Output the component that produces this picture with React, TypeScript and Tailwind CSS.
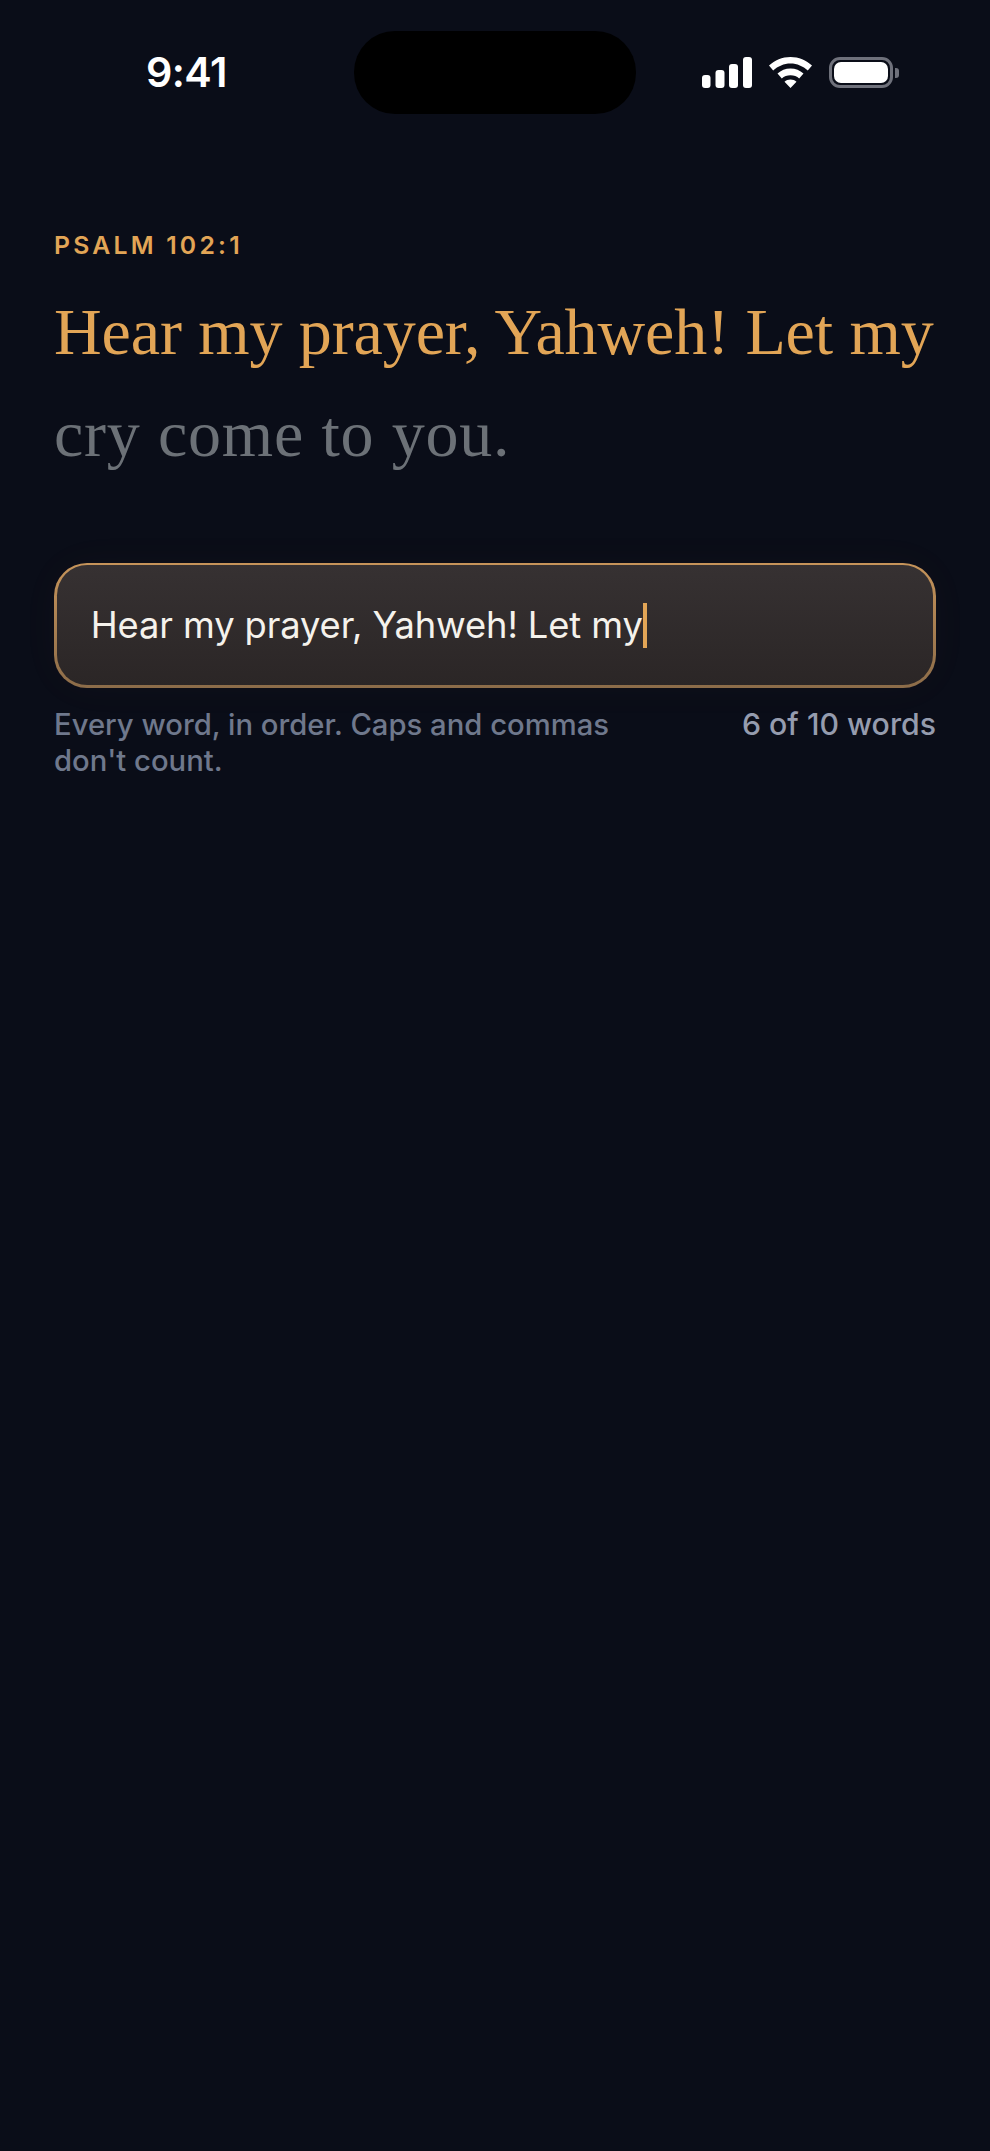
function StatusIcons() {
  return (
    <div className="flex items-center mt-[57px] ml-[66px] h-[31px]">
      <svg width="50" height="31" viewBox="0 0 50 31" fill="#fff" className="block">
        <rect x="0" y="18" width="8.5" height="13" rx="3" />
        <rect x="13.5" y="13" width="9" height="18" rx="3" />
        <rect x="27" y="7" width="9" height="24" rx="3" />
        <rect x="41" y="0" width="9" height="31" rx="3" />
      </svg>
      <svg width="43" height="31" viewBox="0 0 43 31" fill="#fff" className="block ml-[17px]">
        <path d="M21.5 0C13.2 0 5.8 3.2 0 8.6l4.2 5C8.9 9.3 14.9 6.6 21.5 6.6s12.6 2.7 17.3 7l4.2-5C37.2 3.2 29.8 0 21.5 0Z" />
        <path d="M21.5 11.4c-5 0-9.5 1.9-13 5l4.3 5c2.3-2 5.3-3.2 8.7-3.2s6.4 1.2 8.7 3.2l4.3-5c-3.5-3.1-8-5-13-5Z" />
        <path d="M21.5 22.6c-2.3 0-4.4.8-6 2.2l6 6.2 6-6.2c-1.6-1.4-3.7-2.2-6-2.2Z" />
      </svg>
      <div className="flex items-center ml-[17px]">
        <div className="w-[64px] h-[31px] rounded-[11px] border-[3px] border-[#6f717b] p-[2px]">
          <div className="w-full h-full rounded-[7px] bg-white" />
        </div>
        <div className="w-[4px] h-[10px] ml-[2px] rounded-r-[3px] bg-[#6f717b]" />
      </div>
    </div>
  );
}

export default function App() {
  return (
    <div className="min-h-screen bg-[#0a0d18] font-['Inter',sans-serif] [font-optical-sizing:none]">
      <div className="flex items-start h-[114px]">
        <div className="w-[208px] ml-[146px] mt-[47px] text-[41.25px] leading-[50px] font-semibold tracking-[-0.6px] text-white">9:41</div>
        <div className="w-[282px] h-[83px] mt-[31px] rounded-[41px] bg-black" />
        <StatusIcons />
      </div>

      <div className="px-[54px]">
        <div className="mt-[116px] text-[24.75px] leading-[30px] font-semibold tracking-[0.13em] text-[#e2a556]">PSALM 102:1</div>
        <p className="mt-[21px] text-[66px] leading-[101.75px] font-['Liberation_Serif',serif] text-[#6c7177] whitespace-nowrap">
          <span className="block tracking-[-0.1px] text-[#e2a556]">Hear my prayer, Yahweh! Let my</span>
          <span className="block tracking-[0.8px]">cry come to you.</span>
        </p>

        <div className="mt-[78px] p-[2.75px] rounded-[33px] bg-gradient-to-b from-[#c6945a] to-[#8c6c49] shadow-[0_0_44px_rgba(226,165,86,0.03)]">
          <div className="h-[120px] flex items-center pl-[34px] rounded-[30.25px] bg-gradient-to-b from-[#363132] to-[#2b2626]">
            <span className="text-[36.3px] leading-[45px] font-[420] text-[#f5f2ec] whitespace-nowrap tracking-[-0.1px]">Hear my prayer, Yahweh! Let my</span>
            <span className="w-[4px] h-[45px] bg-[#e2a556]" />
          </div>
        </div>

        <div className="mt-[19px] flex items-start justify-between">
          <p className="w-[600px] text-[29.25px] leading-[35.75px] font-[450] text-[#6f788c]">Every word, in order. Caps and commas don't count.</p>
          <span className="text-[30.25px] leading-[35.75px] font-[450] text-[#959cae] whitespace-nowrap">6 of 10 words</span>
        </div>
      </div>
    </div>
  );
}
